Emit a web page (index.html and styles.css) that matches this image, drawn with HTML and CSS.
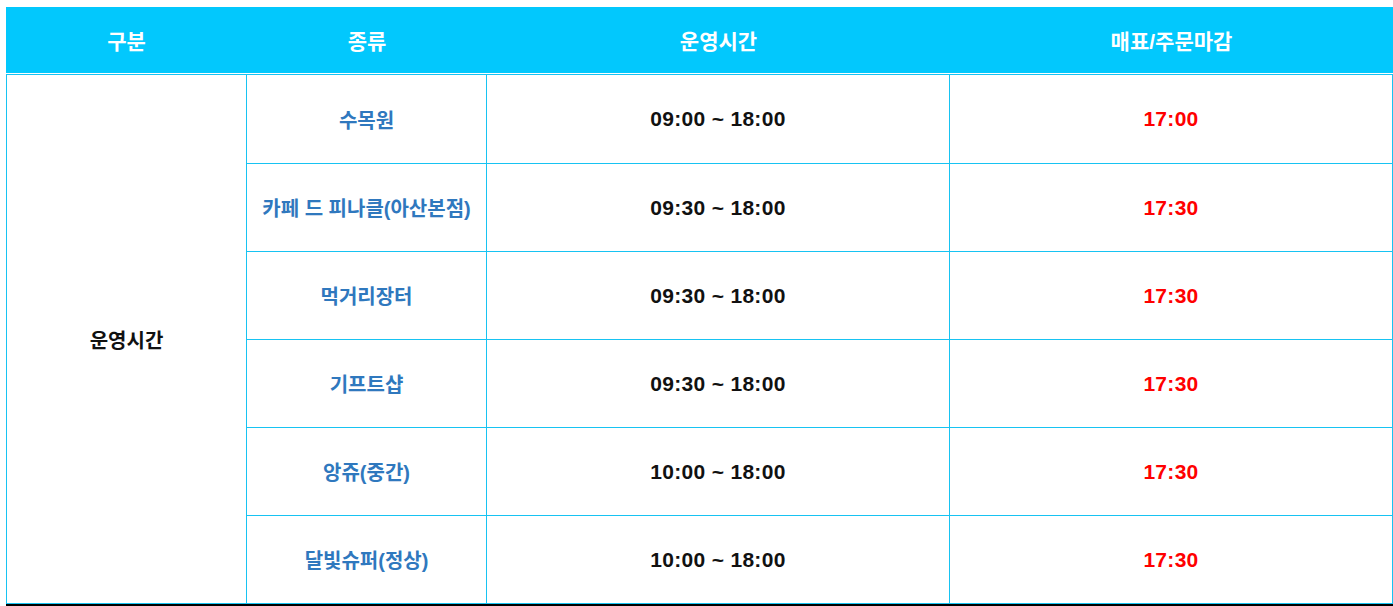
FILE: index.html
```html
<!DOCTYPE html>
<html lang="ko">
<head>
<meta charset="utf-8">
<title>운영시간</title>
<link rel="stylesheet" href="styles.css">
</head>
<body>
<div class="wrap">
  <table class="hours">
    <colgroup>
      <col class="c1"><col class="c2"><col class="c3"><col class="c4">
    </colgroup>
    <thead>
      <tr>
        <th>구분</th>
        <th>종류</th>
        <th>운영시간</th>
        <th>매표/주문마감</th>
      </tr>
    </thead>
    <tbody>
      <tr>
        <td class="group" rowspan="6">운영시간</td>
        <td class="kind">수목원</td>
        <td class="time">09:00 ~ 18:00</td>
        <td class="close">17:00</td>
      </tr>
      <tr>
        <td class="kind">카페 드 피나클(아산본점)</td>
        <td class="time">09:30 ~ 18:00</td>
        <td class="close">17:30</td>
      </tr>
      <tr>
        <td class="kind">먹거리장터</td>
        <td class="time">09:30 ~ 18:00</td>
        <td class="close">17:30</td>
      </tr>
      <tr>
        <td class="kind">기프트샵</td>
        <td class="time">09:30 ~ 18:00</td>
        <td class="close">17:30</td>
      </tr>
      <tr>
        <td class="kind">앙쥬(중간)</td>
        <td class="time">10:00 ~ 18:00</td>
        <td class="close">17:30</td>
      </tr>
      <tr>
        <td class="kind">달빛슈퍼(정상)</td>
        <td class="time">10:00 ~ 18:00</td>
        <td class="close">17:30</td>
      </tr>
    </tbody>
  </table>
  <div class="rule"></div>
</div>
</body>
</html>
```

FILE: styles.css
```css
html, body {
  margin: 0;
  padding: 0;
  background: #ffffff;
}

.wrap {
  padding: 7px 0 0 6px;
}

.hours {
  width: 1387px;
  table-layout: fixed;
  border-collapse: separate;
  border-spacing: 0;
  font-family: "Liberation Sans", "Noto Sans CJK KR", sans-serif;
  font-weight: bold;
}

.c1 { width: 241px; }
.c2 { width: 240px; }
.c3 { width: 463px; }
.c4 { width: 443px; }

.hours th {
  height: 66px;
  padding: 0;
  background: #02c8fd;
  color: #ffffff;
  font-size: 21px;
  font-weight: bold;
  text-align: center;
  vertical-align: middle;
  border-bottom: 1px solid #ffffff;
}

.hours td {
  height: 87px;
  padding: 0;
  text-align: center;
  vertical-align: middle;
  font-size: 20px;
  border-right: 1px solid #17c3f2;
  border-bottom: 1px solid #17c3f2;
}

.hours tbody tr:first-child td {
  border-top: 1px solid #17c3f2;
}

.hours tbody tr:first-child td.kind,
.hours tbody tr:first-child td.time,
.hours tbody tr:first-child td.close {
  height: 88px;
}

.hours td.group {
  border-left: 1px solid #17c3f2;
  color: #111111;
  font-size: 20px;
}

.hours td.kind {
  color: #2f78be;
}

.hours td.time {
  color: #111111;
  font-size: 21px;
  letter-spacing: 0.3px;
}

.hours td.close {
  color: #ff0000;
  font-size: 21px;
  letter-spacing: 0.3px;
}

.rule {
  width: 1387px;
  height: 3px;
  background: #000000;
}
```
